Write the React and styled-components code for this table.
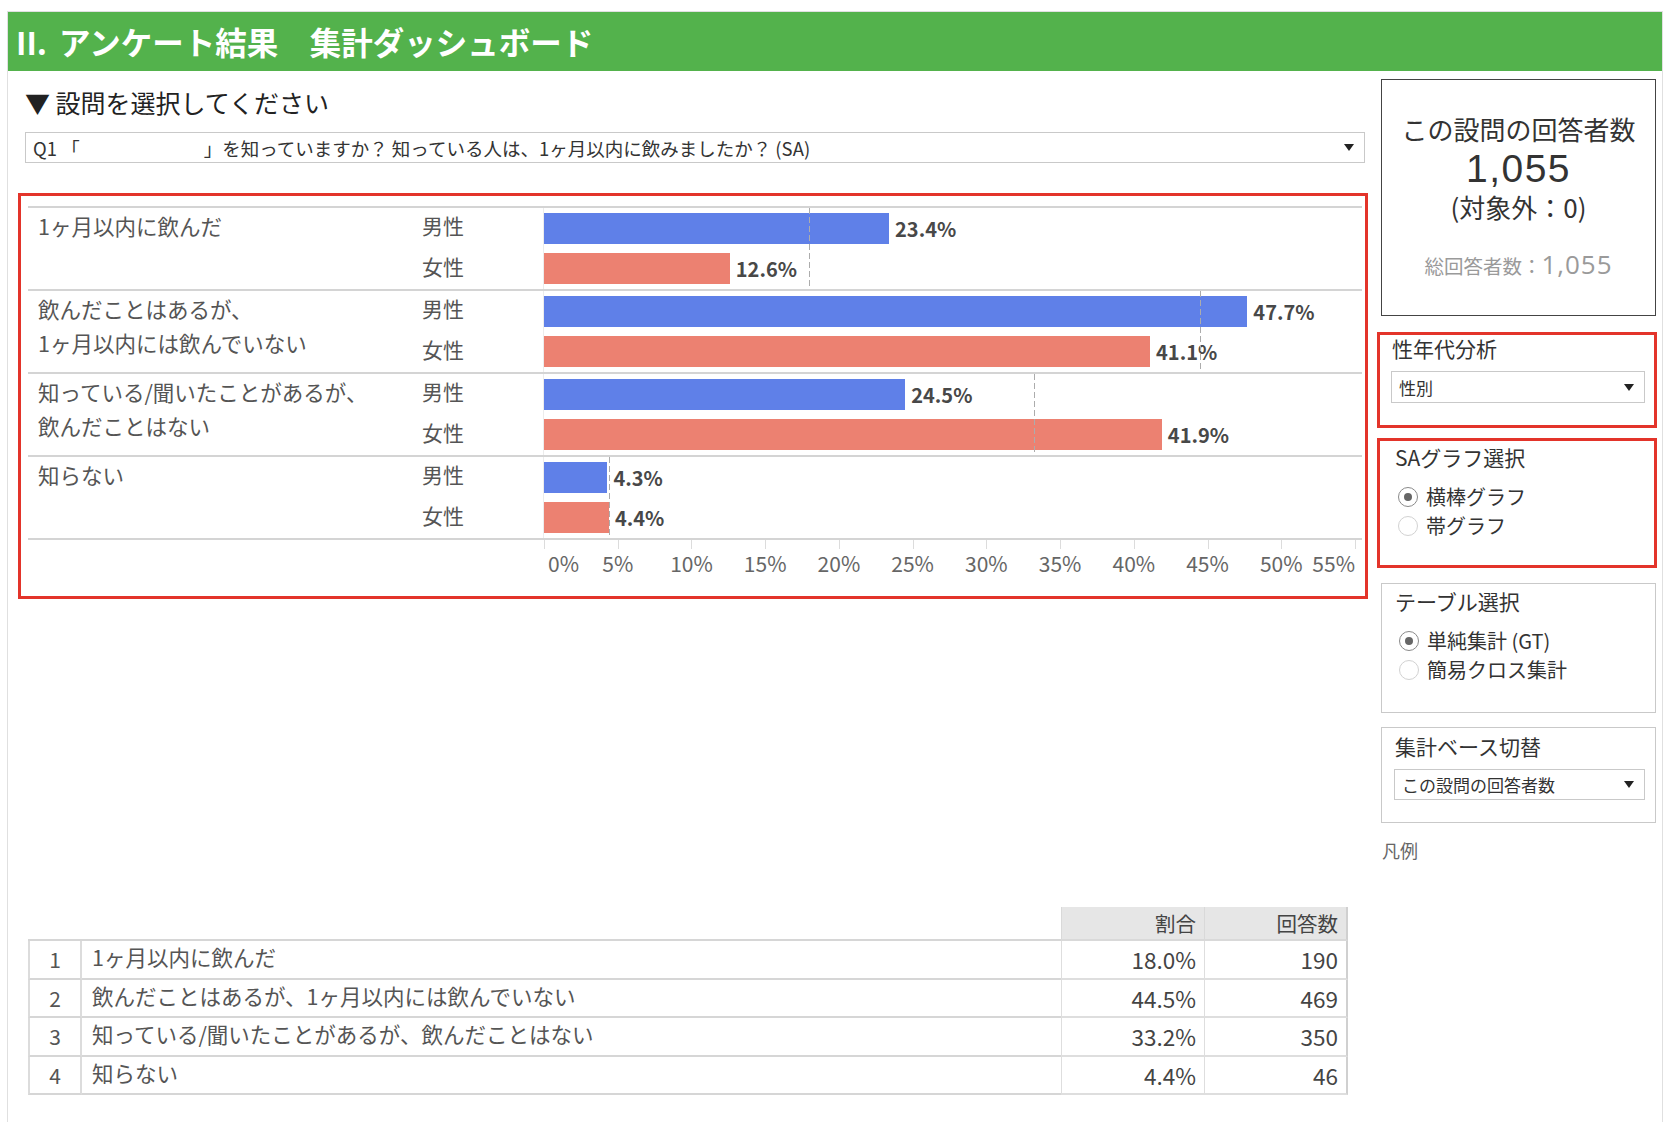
import React from "react";
import styled, { createGlobalStyle } from "styled-components";

const GlobalStyle = createGlobalStyle`
  body {
    margin: 0;
    background: #fff;
    font-family: "Noto Sans CJK JP", "Noto Sans", sans-serif;
    color: #333;
  }
`;

const MAX = 55;
const PLOT = 811;
const pct = (v) => (v / MAX) * PLOT;

const groups = [
  { label: ["1ヶ月以内に飲んだ"], male: 23.4, female: 12.6, avg: 18.0 },
  {
    label: ["飲んだことはあるが、", "1ヶ月以内には飲んでいない"],
    male: 47.7,
    female: 41.1,
    avg: 44.5,
  },
  {
    label: ["知っている/聞いたことがあるが、", "飲んだことはない"],
    male: 24.5,
    female: 41.9,
    avg: 33.2,
  },
  { label: ["知らない"], male: 4.3, female: 4.4, avg: 4.4 },
];

const tableRows = [
  { no: 1, text: "1ヶ月以内に飲んだ", rate: "18.0%", count: 190 },
  { no: 2, text: "飲んだことはあるが、1ヶ月以内には飲んでいない", rate: "44.5%", count: 469 },
  { no: 3, text: "知っている/聞いたことがあるが、飲んだことはない", rate: "33.2%", count: 350 },
  { no: 4, text: "知らない", rate: "4.4%", count: 46 },
];

const Page = styled.div`
  margin: 11px 0 0 7px;
  width: 1656px;
  min-height: 1111px;
  box-sizing: border-box;
  border: 1px solid #e0e0e0;
  border-bottom: none;
`;

const Header = styled.div`
  height: 59px;
  background: #53b24c;
  color: #fff;
  font-size: 31.5px;
  font-weight: 700;
  line-height: 59px;
  padding-left: 8px;
  white-space: nowrap;
  span {
    margin-right: 12px;
  }
`;

const Body = styled.div`
  display: flex;
`;

const Main = styled.div`
  width: 1355px;
  padding-left: 10px;
`;

const Prompt = styled.div`
  margin: 14px 0 0 7px;
  font-size: 25px;
  line-height: 34px;
  color: #222;
`;

const Select = styled.div`
  display: flex;
  align-items: center;
  justify-content: space-between;
  box-sizing: border-box;
  width: ${(p) => p.$width}px;
  height: ${(p) => p.$height || 31}px;
  margin: ${(p) => p.$margin || "0"};
  padding: 0 10px 0 7px;
  border: 1px solid #c9c9c9;
  background: #fff;
  font-size: ${(p) => p.$size || 17}px;
  color: #333;
  white-space: nowrap;
`;

const Blank = styled.span`
  display: inline-block;
  width: 124px;
`;

const Caret = () => (
  <svg width="10" height="7" viewBox="0 0 10 7">
    <path d="M0 0h10L5 7z" fill="#222" />
  </svg>
);

const ChartFrame = styled.div`
  margin-top: 30px;
  width: 1350px;
  height: 406px;
  box-sizing: border-box;
  border: 3px solid #e3342a;
  padding: 10px 3px 0 7px;
`;

const Group = styled.div`
  display: grid;
  grid-template-columns: 394px 122px 818px;
  grid-template-rows: 40px 41px;
  border-top: 2px solid #d4d4d4;
`;

const CatLabel = styled.div`
  grid-row: 1 / span 2;
  padding: 1px 0 0 10px;
  font-size: 21.5px;
  line-height: 33.5px;
  color: #555;
`;

const Gender = styled.div`
  grid-column: 2;
  display: flex;
  align-items: center;
  padding-bottom: 6px;
  font-size: 21px;
  color: #555;
`;

const Plot = styled.div`
  grid-column: 3;
  grid-row: 1 / span 2;
  position: relative;
  display: grid;
  grid-template-rows: 40px 41px;
  border-left: 1px solid #ececec;
  margin-left: -1px;
`;

const BarRow = styled.div`
  display: flex;
  align-items: center;
`;

const Bar = styled.div`
  height: 31px;
  background: ${(p) => (p.$female ? "#ec8171" : "#5f80e8")};
`;

const Value = styled.span`
  margin-left: 6px;
  font-size: 20px;
  font-weight: 700;
  color: #484848;
`;

const AvgLine = styled.div`
  position: absolute;
  top: 0;
  bottom: 0;
  width: 1px;
  background: repeating-linear-gradient(
    to bottom,
    #acacac 0 6px,
    transparent 6px 9px
  );
`;

const Axis = styled.div`
  display: grid;
  grid-template-columns: 516px 818px;
  height: 52px;
  border-top: 2px solid #d4d4d4;
`;

const AxisScale = styled.div`
  grid-column: 2;
  position: relative;
`;

const Tick = styled.div`
  position: absolute;
  top: 0;
  width: 1px;
  height: 9px;
  background: #dcdcdc;
`;

const TickLabel = styled.div`
  position: absolute;
  top: 12px;
  font-size: 21px;
  line-height: 22px;
  color: #666;
  white-space: nowrap;
  transform: translateX(${(p) => p.$shift});
`;

const Table = styled.table`
  margin: 308px 0 0 10px;
  width: 1320px;
  border-collapse: separate;
  border-spacing: 0;
  font-size: 21.5px;
  color: #555;
`;

const HeadBlank = styled.th`
  height: 32px;
  padding: 0;
  border-bottom: 2px solid #d6d6d6;
`;

const HeadCell = styled.th`
  width: ${(p) => p.$w}px;
  padding: 0 8px 0 0;
  box-sizing: border-box;
  background: #e6e6e6;
  border-left: 1px solid #d9d9d9;
  border-right: ${(p) => (p.$last ? "2px solid #d0d0d0" : "none")};
  border-bottom: 2px solid #d9d9d9;
  text-align: right;
  font-size: 20.5px;
  font-weight: 400;
  color: #444;
`;

const IdxCell = styled.td`
  width: 50px;
  height: 36.5px;
  padding: 0;
  text-align: center;
  font-size: 21px;
  border-left: 2px solid #dcdcdc;
  border-right: 2px solid #dcdcdc;
  border-bottom: 2px solid #d6d6d6;
`;

const TextCell = styled.td`
  padding: 0 0 5px 10px;
  border-bottom: 2px solid #d6d6d6;
`;

const NumCell = styled.td`
  padding: 0 8px 0 0;
  text-align: right;
  font-size: 22.5px;
  color: #444;
  border-left: 1px solid #dedede;
  border-right: ${(p) => (p.$last ? "2px solid #d0d0d0" : "none")};
  border-bottom: 2px solid #dedede;
`;

const Side = styled.div`
  width: 280px;
  margin-left: 4px;
  padding-top: 8px;
`;

const StatsBox = styled.div`
  margin-left: 4px;
  width: 275px;
  height: 237px;
  box-sizing: border-box;
  border: 1px solid #444;
  padding-top: 30px;
  text-align: center;
`;

const StatsTitle = styled.div`
  font-size: 26px;
  line-height: 37px;
  color: #333;
`;

const StatsNumber = styled.div`
  font-family: "Liberation Sans", Arial, sans-serif;
  font-size: 39px;
  letter-spacing: 1.5px;
  line-height: 43px;
  color: #333;
`;

const StatsSub = styled.div`
  font-size: 26px;
  line-height: 34px;
  color: #333;
`;

const StatsTotal = styled.div`
  margin-top: 23px;
  font-size: 19.5px;
  line-height: 34px;
  color: #9a9a9a;
  b {
    font-family: "Open Sans", sans-serif;
    font-weight: 400;
    font-size: 26px;
    letter-spacing: 1px;
  }
`;

const Panel = styled.div`
  box-sizing: border-box;
  width: ${(p) => (p.$red ? 280 : 275)}px;
  height: ${(p) => p.$h}px;
  margin: ${(p) => p.$mt}px 0 0 ${(p) => (p.$red ? 0 : 4)}px;
  border: ${(p) => (p.$red ? "3px solid #e3342a" : "1px solid #c9c9c9")};
  padding-top: ${(p) => p.$pt}px;
`;

const PanelTitle = styled.div`
  padding-left: ${(p) => p.$pl || 12}px;
  font-size: 21px;
  line-height: ${(p) => p.$lh || 28}px;
  color: #333;
`;

const RadioList = styled.div`
  margin-top: ${(p) => p.$mt}px;
`;

const RadioRow = styled.div`
  display: flex;
  align-items: center;
  gap: 8px;
  height: 29px;
  padding-left: ${(p) => p.$pl}px;
  font-size: 20px;
  color: #333;
`;

const RadioDot = styled.span`
  display: flex;
  align-items: center;
  justify-content: center;
  width: 20px;
  height: 20px;
  box-sizing: border-box;
  border-radius: 50%;
  border: 1.5px solid ${(p) => (p.$checked ? "#8a8a8a" : "#d2d2d2")};
  &::after {
    content: "";
    width: 8px;
    height: 8px;
    border-radius: 50%;
    background: ${(p) => (p.$checked ? "#666" : "transparent")};
  }
`;

const Legend = styled.div`
  margin: 15px 0 0 5px;
  font-size: 18px;
  line-height: 24px;
  color: #666;
`;

function Radio({ checked, label, pl }) {
  return (
    <RadioRow $pl={pl}>
      <RadioDot $checked={checked} />
      {label}
    </RadioRow>
  );
}

function ChartGroup({ g }) {
  return (
    <Group>
      <CatLabel>
        {g.label.map((l) => (
          <div key={l}>{l}</div>
        ))}
      </CatLabel>
      <Gender style={{ gridRow: 1 }}>男性</Gender>
      <Gender style={{ gridRow: 2 }}>女性</Gender>
      <Plot>
        <BarRow>
          <Bar style={{ width: pct(g.male) }} />
          <Value>{g.male.toFixed(1)}%</Value>
        </BarRow>
        <BarRow>
          <Bar $female style={{ width: pct(g.female) }} />
          <Value>{g.female.toFixed(1)}%</Value>
        </BarRow>
        <AvgLine style={{ left: pct(g.avg) }} />
      </Plot>
    </Group>
  );
}

export default function App() {
  const ticks = Array.from({ length: 12 }, (_, i) => i * 5);
  return (
    <>
      <GlobalStyle />
      <Page>
        <Header>
          <span>II.</span>アンケート結果　集計ダッシュボード
        </Header>
        <Body>
          <Main>
            <Prompt>▼ 設問を選択してください</Prompt>
            <Select $width={1340} $size={18.5} $margin="13px 0 0 7px">
              <span>
                Q1 「<Blank />」を知っていますか？ 知っている人は、1ヶ月以内に飲みましたか？ (SA)
              </span>
              <Caret />
            </Select>
            <ChartFrame>
              {groups.map((g, i) => (
                <ChartGroup key={i} g={g} />
              ))}
              <Axis>
                <AxisScale>
                  {ticks.map((t) => (
                    <Tick key={"t" + t} style={{ left: pct(t) }} />
                  ))}
                  {ticks.map((t, i) => (
                    <TickLabel
                      key={"l" + t}
                      style={{ left: pct(t) + (i === 0 ? 4 : 0) }}
                      $shift={i === 0 ? "0" : i === ticks.length - 1 ? "-100%" : "-50%"}
                    >
                      {t}%
                    </TickLabel>
                  ))}
                </AxisScale>
              </Axis>
            </ChartFrame>
            <Table>
              <thead>
                <tr>
                  <HeadBlank />
                  <HeadBlank />
                  <HeadCell $w={143}>割合</HeadCell>
                  <HeadCell $w={144} $last>
                    回答数
                  </HeadCell>
                </tr>
              </thead>
              <tbody>
                {tableRows.map((r) => (
                  <tr key={r.no}>
                    <IdxCell>{r.no}</IdxCell>
                    <TextCell>{r.text}</TextCell>
                    <NumCell>{r.rate}</NumCell>
                    <NumCell $last>{r.count}</NumCell>
                  </tr>
                ))}
              </tbody>
            </Table>
          </Main>
          <Side>
            <StatsBox>
              <StatsTitle>この設問の回答者数</StatsTitle>
              <StatsNumber>1,055</StatsNumber>
              <StatsSub>(対象外：0)</StatsSub>
              <StatsTotal>
                総回答者数：<b>1,055</b>
              </StatsTotal>
            </StatsBox>
            <Panel $red $h={96} $mt={16} $pt={0}>
              <PanelTitle $lh={26}>性年代分析</PanelTitle>
              <Select $width={254} $height={32} $margin="10px 0 0 11px">
                <span>性別</span>
                <Caret />
              </Select>
            </Panel>
            <Panel $red $h={130} $mt={10} $pt={2}>
              <PanelTitle $pl={15}>SAグラフ選択</PanelTitle>
              <RadioList $mt={11}>
                <Radio checked label="横棒グラフ" pl={18} />
                <Radio label="帯グラフ" pl={18} />
              </RadioList>
            </Panel>
            <Panel $h={130} $mt={15} $pt={3}>
              <PanelTitle $pl={13}>テーブル選択</PanelTitle>
              <RadioList $mt={11}>
                <Radio checked label="単純集計 (GT)" pl={17} />
                <Radio label="簡易クロス集計" pl={17} />
              </RadioList>
            </Panel>
            <Panel $h={96} $mt={14} $pt={4}>
              <PanelTitle $pl={13}>集計ベース切替</PanelTitle>
              <Select $width={251} $height={31} $margin="9px 0 0 12px">
                <span>この設問の回答者数</span>
                <Caret />
              </Select>
            </Panel>
            <Legend>凡例</Legend>
          </Side>
        </Body>
      </Page>
    </>
  );
}
